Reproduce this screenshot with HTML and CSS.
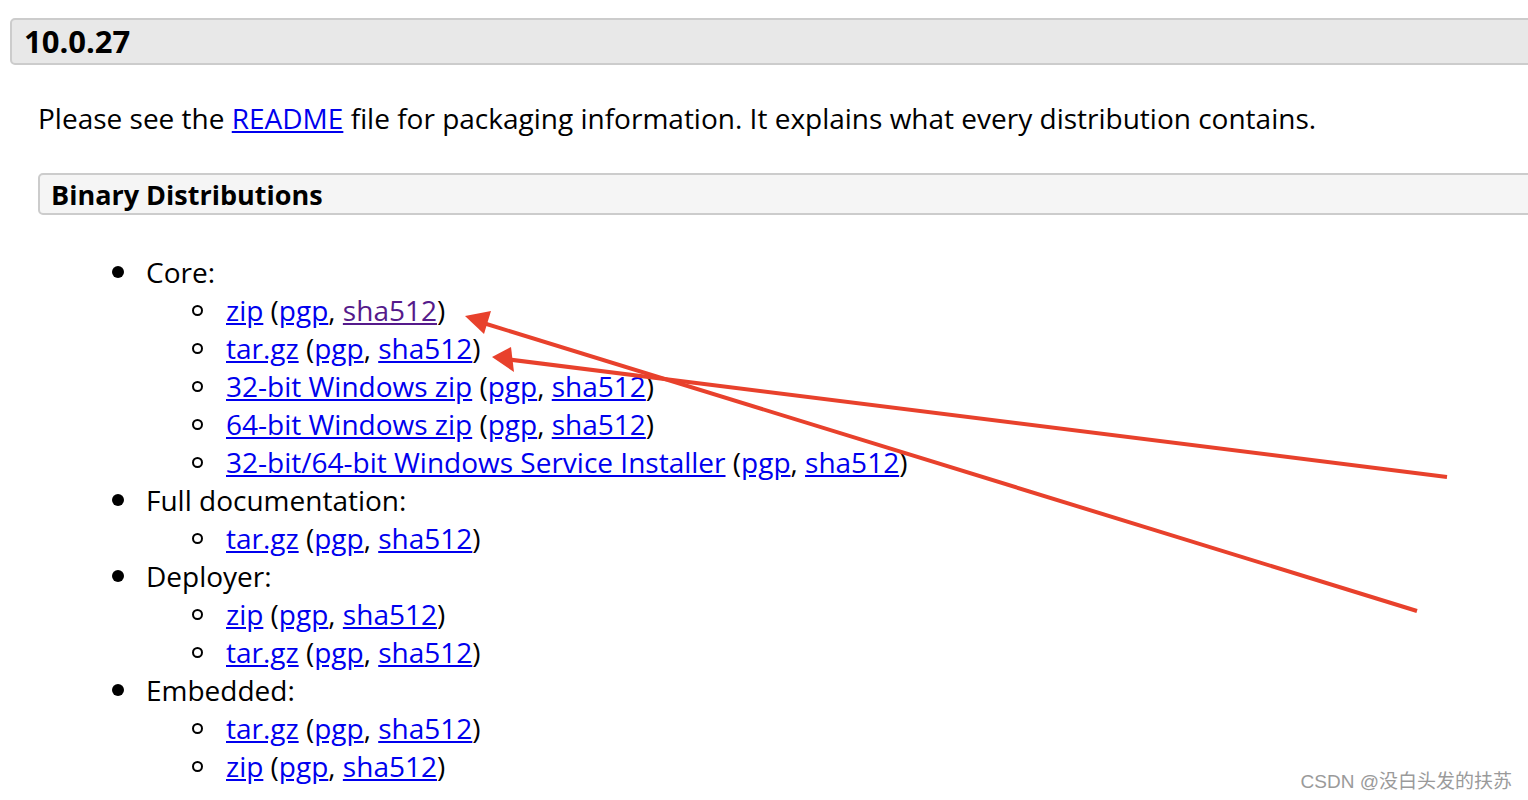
FILE: index.html
```html
<!doctype html>
<html>
  <head>
    <meta charset="utf-8">
    <title>Tomcat 10 Downloads</title>
    <link rel="stylesheet" href="styles.css">
</head>
<body>

<div id="release">
  <h3 class="versionHead">10.0.27</h3>
  <div class="releaseBody">
    <p class="intro">Please see the <a href="#">README</a> file for packaging information. It explains what every distribution contains.</p>

    <h4 class="distHead">Binary Distributions</h4>

    <ul class="distList">
      <li>Core:
        <ul>
          <li><a href="#">zip</a> (<a href="#">pgp</a>, <a href="#" class="visited">sha512</a>)</li>
          <li><a href="#">tar.gz</a> (<a href="#">pgp</a>, <a href="#">sha512</a>)</li>
          <li><a href="#">32-bit Windows zip</a> (<a href="#">pgp</a>, <a href="#">sha512</a>)</li>
          <li><a href="#">64-bit Windows zip</a> (<a href="#">pgp</a>, <a href="#">sha512</a>)</li>
          <li><a href="#">32-bit/64-bit Windows Service Installer</a> (<a href="#">pgp</a>, <a href="#">sha512</a>)</li>
        </ul>
      </li>
      <li>Full documentation:
        <ul>
          <li><a href="#">tar.gz</a> (<a href="#">pgp</a>, <a href="#">sha512</a>)</li>
        </ul>
      </li>
      <li>Deployer:
        <ul>
          <li><a href="#">zip</a> (<a href="#">pgp</a>, <a href="#">sha512</a>)</li>
          <li><a href="#">tar.gz</a> (<a href="#">pgp</a>, <a href="#">sha512</a>)</li>
        </ul>
      </li>
      <li>Embedded:
        <ul>
          <li><a href="#">tar.gz</a> (<a href="#">pgp</a>, <a href="#">sha512</a>)</li>
          <li><a href="#">zip</a> (<a href="#">pgp</a>, <a href="#">sha512</a>)</li>
        </ul>
      </li>
    </ul>
  </div>
</div>

<!-- red annotation arrows drawn over the page -->
<svg id="arrows" width="1528" height="800" viewBox="0 0 1528 800">
  <g stroke="#e8412c" stroke-width="4" stroke-linecap="butt" fill="#e8412c">
    <line x1="1417" y1="611" x2="480" y2="322"/>
    <polygon points="465,316 491,311 484,334" stroke="none"/>
    <line x1="1447" y1="477" x2="505" y2="359"/>
    <polygon points="492,357 511,347 514,372" stroke="none"/>
  </g>
</svg>

<div id="watermark">CSDN @没白头发的扶苏</div>

</body>
</html>
```

FILE: styles.css
```css
body{
  margin: 0;
  padding: 0;
  background-color: #fff;
  color: #000;
  font-family: "Open Sans", "Liberation Sans", sans-serif;
  font-size: 28px;
  line-height: 38px;
  overflow: hidden;
}
a{
  color: #0000ee;
}
a.visited{
  color: #551a8b;
}
#release{
  padding-top: 18px;
}
.versionHead{
  margin: 0 -10px 0 10px;
  height: 47px;
  box-sizing: border-box;
  padding: 0 12px;
  font-size: 31px;
  line-height: 43px;
  font-weight: bold;
  background-color: #e8e8e8;
  border: 2px solid #cccccc;
  border-radius: 5px;
}
.releaseBody{
  padding-left: 38px;
}
.intro{
  margin: 34px 0 36px 0;
}
.distHead{
  margin: 0 -10px 0 0;
  height: 42px;
  box-sizing: border-box;
  padding: 0 11px;
  font-size: 27px;
  line-height: 40px;
  font-weight: bold;
  background-color: #f5f5f5;
  border: 2px solid #cccccc;
  border-radius: 5px;
}
.distList{
  margin: 38px 0 0 0;
  padding-left: 108px;
  list-style: none;
}
.distList ul{
  margin: 0;
  padding-left: 80px;
  list-style: none;
}
.distList li{
  position: relative;
}
.distList li::before{
  content: "";
  position: absolute;
  left: -34px;
  top: 13px;
  width: 12px;
  height: 12px;
  box-sizing: border-box;
  border-radius: 50%;
  background-color: #000;
}
.distList ul li::before{
  background-color: transparent;
  border: 2px solid #000;
  top: 14px;
  width: 11px;
  height: 11px;
}
#arrows{
  position: absolute;
  left: 0;
  top: 0;
  pointer-events: none;
}
#watermark{
  position: absolute;
  right: 16px;
  bottom: 6px;
  font-family: "Liberation Sans", "Noto Sans CJK SC", sans-serif;
  font-size: 19px;
  line-height: 24px;
  color: #9a9a9a;
}
```
